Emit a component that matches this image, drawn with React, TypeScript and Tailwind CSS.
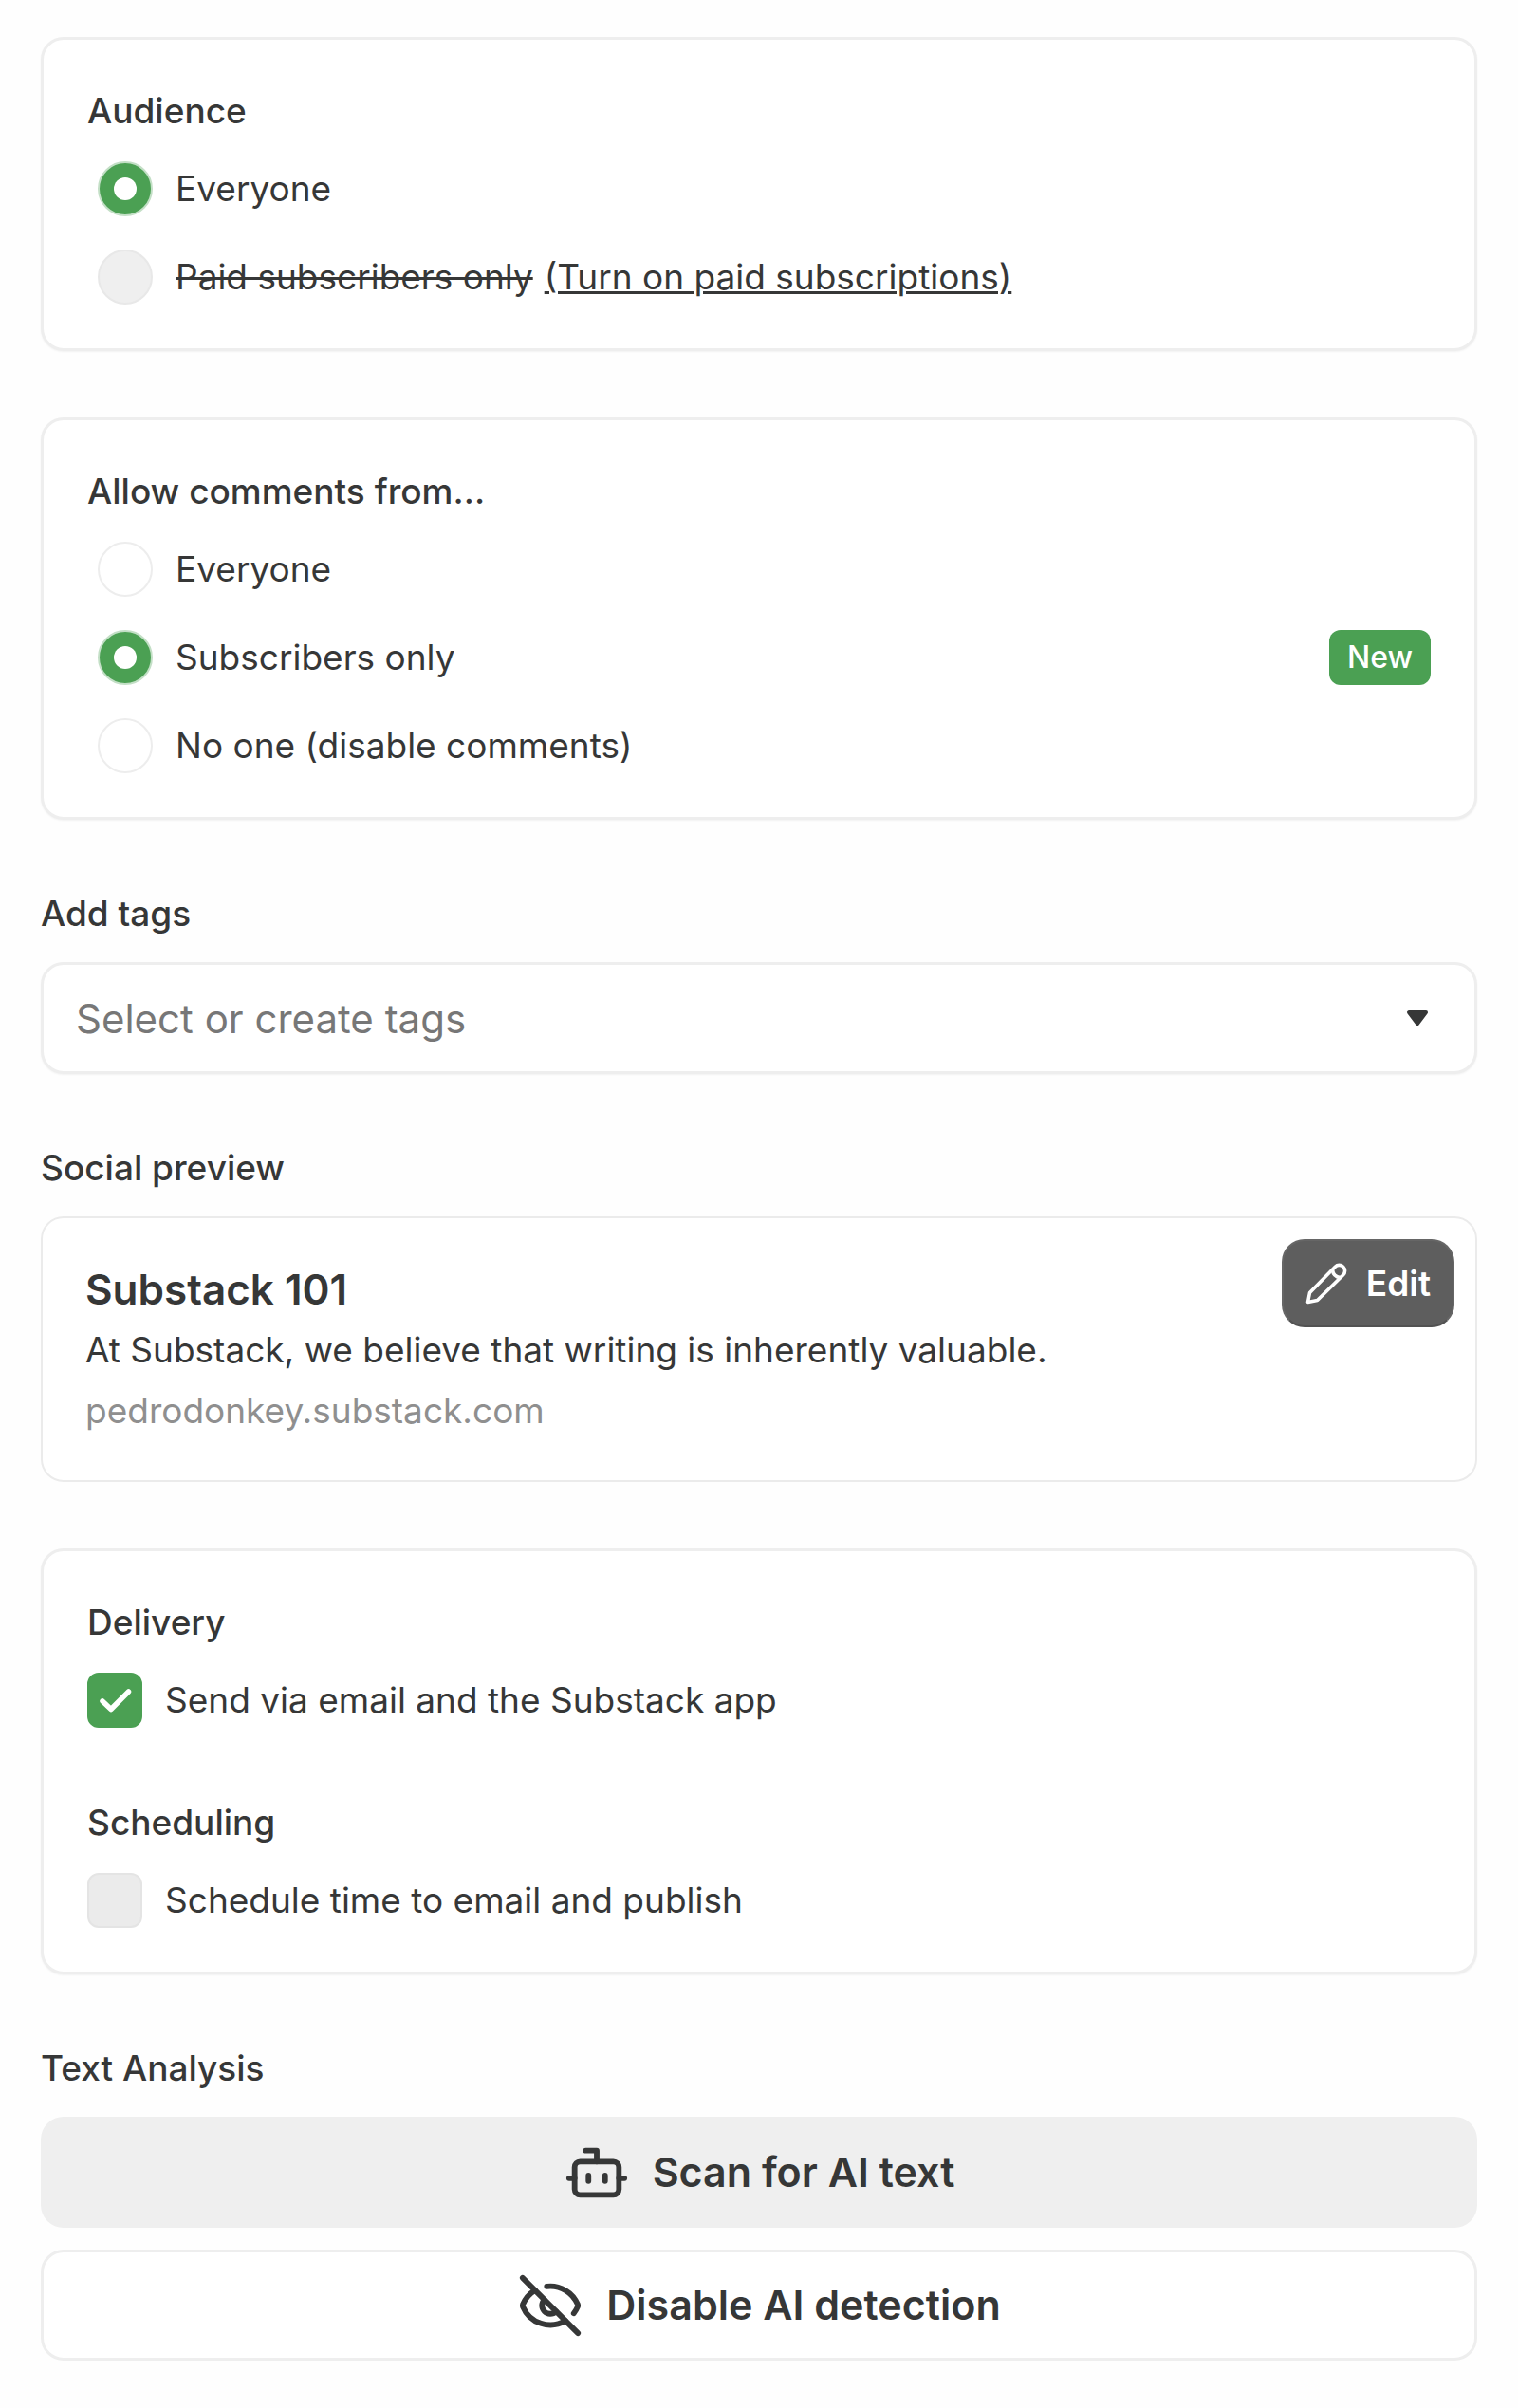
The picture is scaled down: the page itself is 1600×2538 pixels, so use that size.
import type { ReactNode } from 'react'
import { Bot, EyeOff } from 'lucide-react'

function Card({ children }: { children: ReactNode }) {
  return (
    <section className="flex flex-col rounded-3xl border-3 border-[#eeeeee] bg-white px-[46px] pt-13 pb-[29px] shadow-xs">
      {children}
    </section>
  )
}

function CardTitle({ children }: { children: ReactNode }) {
  return <h2 className="mb-3 text-[37px] leading-[46px] font-medium">{children}</h2>
}

type RadioProps = {
  id: string
  name: string
  label: ReactNode
  checked?: boolean
  disabled?: boolean
  children?: ReactNode
}

function Radio({ id, name, label, checked, disabled, children }: RadioProps) {
  return (
    <div className="flex h-[93px] items-center pl-[11px]">
      <input
        type="radio"
        id={id}
        name={name}
        defaultChecked={checked}
        disabled={disabled}
        className="grid size-[58px] shrink-0 appearance-none place-items-center rounded-full border-2 border-[#ededed] bg-white before:size-6 before:rounded-full before:bg-white checked:border-[#c3dfc6] checked:bg-[#4ba053] disabled:border-[#e8e8e8] disabled:bg-[#efefef] disabled:before:hidden"
      />
      <label htmlFor={id} className="ml-6 text-[37px] leading-[46px]">
        {label}
      </label>
      {children}
    </div>
  )
}

type CheckboxProps = {
  id: string
  label: string
  checked?: boolean
}

function Checkbox({ id, label, checked }: CheckboxProps) {
  return (
    <div className="flex h-[93px] items-center">
      <span className="grid shrink-0">
        <input
          type="checkbox"
          id={id}
          defaultChecked={checked}
          className="peer col-start-1 row-start-1 size-[58px] appearance-none rounded-xl border-2 border-[#e4e4e4] bg-[#ebebeb] checked:border-[#4ba053] checked:bg-[#4ba053]"
        />
        <svg
          viewBox="0 0 58 58"
          className="pointer-events-none col-start-1 row-start-1 hidden size-[58px] peer-checked:block"
          fill="none"
          stroke="white"
          strokeWidth="5.5"
          strokeLinecap="round"
          strokeLinejoin="round"
        >
          <path d="M16 30 25 38.5 43.5 20" />
        </svg>
      </span>
      <label htmlFor={id} className="ml-6 text-[37px] leading-[46px]">
        {label}
      </label>
    </div>
  )
}

const sectionLabel = 'mb-[22px] text-[37px] leading-[58px] font-medium'

export default function App() {
  return (
    <main className="flex min-h-screen flex-col gap-[70px] bg-[#fefefe] px-[43px] pt-[39px] pb-12 font-['Inter',sans-serif] text-[#363737]">
      <Card>
        <CardTitle>Audience</CardTitle>
        <Radio id="audience-everyone" name="audience" label="Everyone" checked />
        <Radio
          id="audience-paid"
          name="audience"
          label={<s className="decoration-3">Paid subscribers only</s>}
          disabled
        >
          <a href="#paid" className="ml-3 text-[37px] leading-[46px] underline decoration-3">
            (Turn on paid subscriptions)
          </a>
        </Radio>
      </Card>

      <Card>
        <CardTitle>Allow comments from...</CardTitle>
        <Radio id="comments-everyone" name="comments" label="Everyone" />
        <Radio id="comments-subscribers" name="comments" label="Subscribers only" checked>
          <span className="ml-auto flex h-[58px] items-center rounded-xl bg-[#4ba053] px-[19px] text-[32px] font-medium text-white">
            New
          </span>
        </Radio>
        <Radio id="comments-none" name="comments" label="No one (disable comments)" />
      </Card>

      <section className="flex flex-col">
        <label htmlFor="tags" className={sectionLabel}>
          Add tags
        </label>
        <div className="flex h-[118px] items-center rounded-3xl border-3 border-[#eeeeee] bg-white pr-12 pl-[34px] shadow-xs">
          <input
            id="tags"
            type="text"
            placeholder="Select or create tags"
            className="min-w-0 grow bg-transparent text-[42px] outline-none placeholder:text-[#777777]"
          />
          <svg viewBox="0 0 24 20" className="h-5 w-6 shrink-0">
            <path
              d="M3 4h18L12 16z"
              fill="#363737"
              stroke="#363737"
              strokeWidth="4"
              strokeLinejoin="round"
            />
          </svg>
        </div>
      </section>

      <section className="flex flex-col">
        <h2 className={sectionLabel}>Social preview</h2>
        <div className="flex items-start justify-between rounded-3xl border-2 border-[#ebebeb] bg-white pt-[22px] pr-[22px] pb-[41px] pl-[45px]">
          <div className="flex flex-col pt-[21px]">
            <h3 className="text-[44px] leading-[64px] font-semibold">Substack 101</h3>
            <p className="text-[37px] leading-[64px]">
              At Substack, we believe that writing is inherently valuable.
            </p>
            <p className="text-[37px] leading-[64px] text-[#8f8f8f]">pedrodonkey.substack.com</p>
          </div>
          <button
            type="button"
            className="flex h-[93px] items-center gap-5 rounded-3xl border-2 border-[#666666] border-b-[#525252] bg-[#5e5e5e] px-[23px] text-[37px] font-semibold text-white"
          >
            <svg
              viewBox="0 0 44 44"
              className="size-11"
              fill="none"
              stroke="currentColor"
              strokeWidth="3.6"
              strokeLinejoin="round"
            >
              <path d="M2.5 41.5 4.5 31.5 31.2 4.2a6 6 0 0 1 8.6 8.6L12.5 39.5z" />
              <path d="M28.5 7.5c.5 4.5 3.5 7.5 8 8" />
            </svg>
            Edit
          </button>
        </div>
      </section>

      <Card>
        <CardTitle>Delivery</CardTitle>
        <Checkbox id="send-email" label="Send via email and the Substack app" checked />
        <div className="mt-15 flex flex-col">
          <CardTitle>Scheduling</CardTitle>
          <Checkbox id="schedule" label="Schedule time to email and publish" />
        </div>
      </Card>

      <section className="flex flex-col">
        <h2 className={sectionLabel}>Text Analysis</h2>
        <div className="flex flex-col gap-[23px]">
          <button
            type="button"
            className="flex h-[117px] items-center justify-center gap-6 rounded-3xl bg-[#efefef] text-[43px] font-semibold"
          >
            <Bot className="size-[70px]" />
            Scan for AI text
          </button>
          <button
            type="button"
            className="flex h-[117px] items-center justify-center gap-6 rounded-3xl border-3 border-[#eeeeee] bg-white text-[43px] font-semibold"
          >
            <EyeOff className="size-[70px]" />
            Disable AI detection
          </button>
        </div>
      </section>
    </main>
  )
}
